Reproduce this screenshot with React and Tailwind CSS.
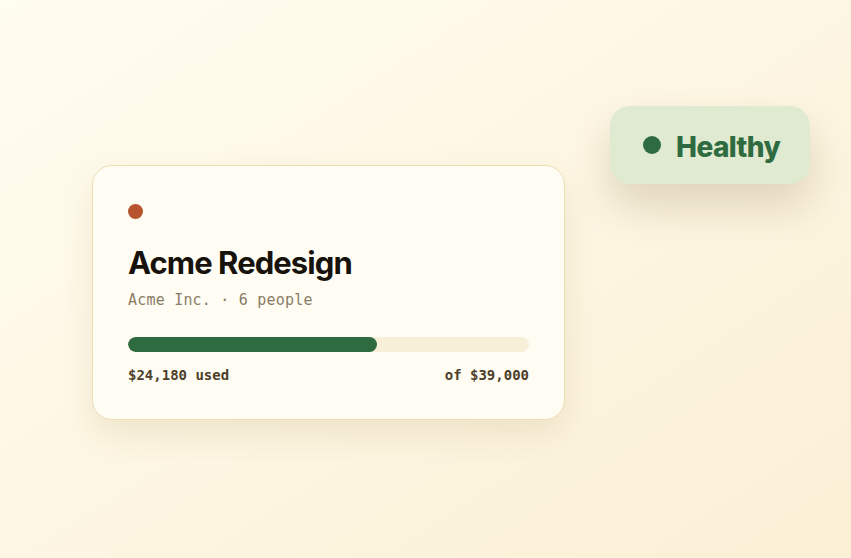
export default function App() {
  const used = 24180;
  const total = 39000;
  const pct = (used / total) * 100;

  return (
    <div className="w-[851px] h-[558px] overflow-hidden bg-gradient-to-br from-[#fffdf0] to-[#fbefd5] flex items-start">
      {/* project card */}
      <div className="ml-[92px] mt-[165px] w-[473px] h-[255px] rounded-[20px] border border-[#ecdfb3] bg-[#fffcf3] shadow-[0_14px_32px_rgba(140,110,40,0.12)] px-[35px] pt-[38px]">
        <div className="w-[15px] h-[15px] rounded-full bg-[#b8532f]" />
        <h1
          className="mt-[26px] text-[31px] leading-[36px] font-bold tracking-[-0.03em] text-[#17130c]"
          style={{ fontFamily: "Inter, 'Noto Sans', sans-serif" }}
        >
          Acme Redesign
        </h1>
        <p
          className="mt-[9px] text-[15px] leading-[20px] tracking-[0.2px] text-[#8a7d66]"
          style={{ fontFamily: "'DejaVu Sans Mono', 'Liberation Mono', monospace" }}
        >
          Acme Inc. · 6 people
        </p>
        <div className="mt-[27px] h-[15px] w-full rounded-full bg-[#f8efd9] overflow-hidden">
          <div className="h-full rounded-full bg-[#2f6b40]" style={{ width: `${pct}%` }} />
        </div>
        <div
          className="mt-[14px] flex justify-between text-[14px] leading-[18px] font-bold text-[#4d3f2a]"
          style={{ fontFamily: "'DejaVu Sans Mono', 'Liberation Mono', monospace" }}
        >
          <span>$24,180 used</span>
          <span>of $39,000</span>
        </div>
      </div>

      {/* status pill */}
      <div className="ml-[45px] mt-[106px] w-[200px] h-[78px] rounded-[20px] bg-[#dfead0] shadow-[0_22px_40px_rgba(110,85,40,0.2)] flex items-center pl-[33px] gap-[15px]">
        <div className="w-[18px] h-[18px] rounded-full bg-[#2f6b40]" />
        <span
          className="mt-[3px] text-[28px] leading-[34px] font-extrabold tracking-[-0.02em] text-[#2f6b40]"
          style={{ fontFamily: "Inter, 'Noto Sans', sans-serif" }}
        >
          Healthy
        </span>
      </div>
    </div>
  );
}
